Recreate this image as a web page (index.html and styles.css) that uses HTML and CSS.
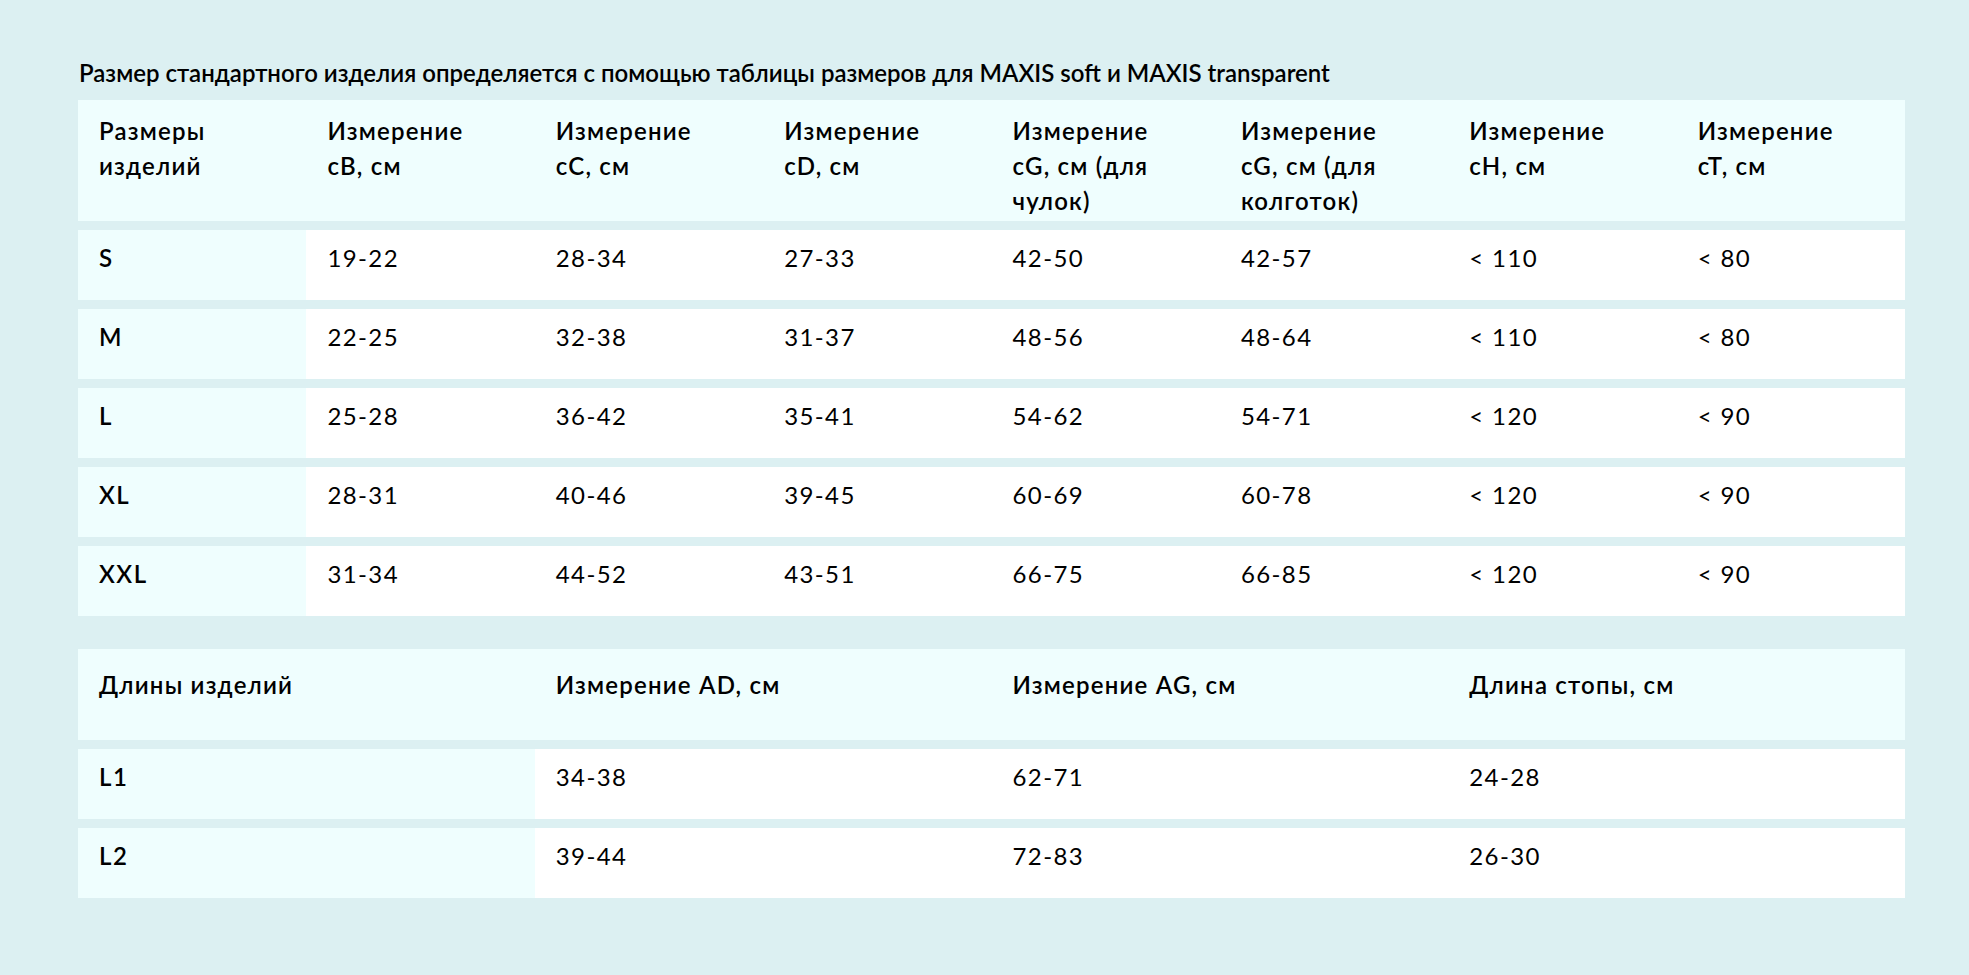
FILE: index.html
```html
<!DOCTYPE html>
<html lang="ru">
<head>
<meta charset="utf-8">
<title>Таблица размеров MAXIS</title>
<link rel="stylesheet" href="styles.css">
</head>
<body>
<div class="page">
  <h1 class="title">Размер стандартного изделия определяется с помощью таблицы размеров для MAXIS soft и MAXIS transparent</h1>

  <div class="table sizes">
    <div class="row head">
      <div class="cell">Размеры изделий</div>
      <div class="cell">Измерение cB,&nbsp;см</div>
      <div class="cell">Измерение cC,&nbsp;см</div>
      <div class="cell">Измерение cD,&nbsp;см</div>
      <div class="cell">Измерение cG,&nbsp;см (для чулок)</div>
      <div class="cell">Измерение cG,&nbsp;см (для колготок)</div>
      <div class="cell">Измерение cH,&nbsp;см</div>
      <div class="cell">Измерение cT,&nbsp;см</div>
    </div>
    <div class="row body">
      <div class="cell key">S</div><div class="cell">19-22</div><div class="cell">28-34</div><div class="cell">27-33</div><div class="cell">42-50</div><div class="cell">42-57</div><div class="cell">&lt; 110</div><div class="cell">&lt; 80</div>
    </div>
    <div class="row body">
      <div class="cell key">M</div><div class="cell">22-25</div><div class="cell">32-38</div><div class="cell">31-37</div><div class="cell">48-56</div><div class="cell">48-64</div><div class="cell">&lt; 110</div><div class="cell">&lt; 80</div>
    </div>
    <div class="row body">
      <div class="cell key">L</div><div class="cell">25-28</div><div class="cell">36-42</div><div class="cell">35-41</div><div class="cell">54-62</div><div class="cell">54-71</div><div class="cell">&lt; 120</div><div class="cell">&lt; 90</div>
    </div>
    <div class="row body">
      <div class="cell key">XL</div><div class="cell">28-31</div><div class="cell">40-46</div><div class="cell">39-45</div><div class="cell">60-69</div><div class="cell">60-78</div><div class="cell">&lt; 120</div><div class="cell">&lt; 90</div>
    </div>
    <div class="row body">
      <div class="cell key">XXL</div><div class="cell">31-34</div><div class="cell">44-52</div><div class="cell">43-51</div><div class="cell">66-75</div><div class="cell">66-85</div><div class="cell">&lt; 120</div><div class="cell">&lt; 90</div>
    </div>
  </div>

  <div class="table lengths">
    <div class="row head">
      <div class="cell">Длины изделий</div>
      <div class="cell">Измерение AD, см</div>
      <div class="cell">Измерение AG, см</div>
      <div class="cell">Длина стопы, см</div>
    </div>
    <div class="row body">
      <div class="cell key">L1</div><div class="cell">34-38</div><div class="cell">62-71</div><div class="cell">24-28</div>
    </div>
    <div class="row body">
      <div class="cell key">L2</div><div class="cell">39-44</div><div class="cell">72-83</div><div class="cell">26-30</div>
    </div>
  </div>
</div>
</body>
</html>
```

FILE: styles.css
```css
html, body {
  margin: 0;
  padding: 0;
  background: #dcf0f2;
}

body {
  font-family: "Lato", "Noto Sans", sans-serif;
  color: #000;
}

.page {
  width: 1827px;
  margin-left: 78px;
  padding-top: 56px;
}

.title {
  margin: 0 0 10px 1px;
  font-size: 24px;
  line-height: 34px;
  font-weight: 600;
  letter-spacing: 0;
}

.table {
  display: flex;
  flex-direction: column;
  gap: 9px;
}

.lengths {
  margin-top: 33px;
}

.row {
  display: grid;
}

.sizes .row {
  grid-template-columns: repeat(8, 1fr);
}

.lengths .row {
  grid-template-columns: repeat(4, 1fr);
}

.cell {
  padding-left: 21px;
  padding-right: 12px;
}

.head {
  background: #effefe;
  height: 121px;
  box-sizing: border-box;
  padding-top: 13px;
}

.head .cell {
  font-size: 24px;
  line-height: 35px;
  font-weight: 600;
  letter-spacing: 1.2px;
}

.lengths .head {
  height: 91px;
  padding-top: 18px;
}

.body {
  height: 70px;
  background: #ffffff;
}

.body .cell {
  box-sizing: border-box;
  padding-top: 11px;
  font-size: 24px;
  line-height: 34px;
  font-weight: 400;
  letter-spacing: 1.4px;
}

.body .cell.key {
  background: #effefe;
  font-weight: 600;
  letter-spacing: 1.5px;
}
```
